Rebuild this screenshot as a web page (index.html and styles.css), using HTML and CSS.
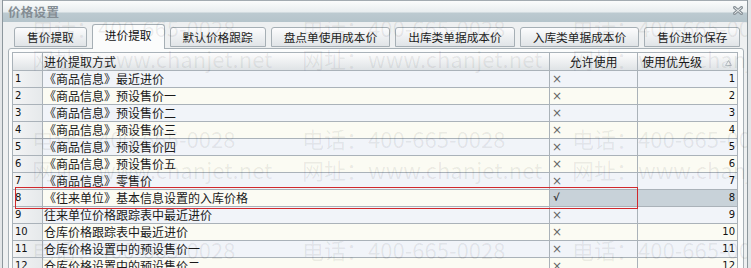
FILE: index.html
```html
<!DOCTYPE html>
<html lang="zh-CN">
<head>
<meta charset="utf-8">
<title>价格设置</title>
<link rel="stylesheet" href="styles.css">
</head>
<body>
<div class="window">
  <div class="titlebar">
    <span class="title">价格设置</span>
    <svg class="close" width="10" height="9" viewBox="0 0 10 9">
      <path d="M1.5 1.5 L8.5 7.5 M8.5 1.5 L1.5 7.5" stroke="#8b949a" stroke-width="3" stroke-linecap="square" fill="none"/>
      <path d="M1.5 1.5 L8.5 7.5 M8.5 1.5 L1.5 7.5" stroke="#f4f6f7" stroke-width="1" fill="none"/>
    </svg>
  </div>
  <div class="content">
    <div class="tabs">
      <div class="tab">售价提取</div>
      <div class="tab active">进价提取</div>
      <div class="tab">默认价格跟踪</div>
      <div class="tab">盘点单使用成本价</div>
      <div class="tab">出库类单据成本价</div>
      <div class="tab">入库类单据成本价</div>
      <div class="tab">售价进价保存</div>
    </div>
    <div class="panel">
      <div class="grid">
        <div class="row head">
          <div class="cell num"></div>
          <div class="cell name">进价提取方式</div>
          <div class="cell allow center">允许使用</div>
          <div class="cell prio headprio"><span>使用优先级</span><svg class="sort" width="7" height="6" viewBox="0 0 7 6"><path d="M3.5 0.5 L6.5 5.5 L0.5 5.5 Z" fill="none" stroke="#b3bbc1" stroke-width="1"/></svg></div>
        </div>
        <div class="row odd"><div class="cell num">1</div><div class="cell name">《商品信息》最近进价</div><div class="cell allow">×</div><div class="cell prio">1</div></div>
        <div class="row even"><div class="cell num">2</div><div class="cell name">《商品信息》预设售价一</div><div class="cell allow">×</div><div class="cell prio">2</div></div>
        <div class="row odd"><div class="cell num">3</div><div class="cell name">《商品信息》预设售价二</div><div class="cell allow">×</div><div class="cell prio">3</div></div>
        <div class="row even"><div class="cell num">4</div><div class="cell name">《商品信息》预设售价三</div><div class="cell allow">×</div><div class="cell prio">4</div></div>
        <div class="row odd"><div class="cell num">5</div><div class="cell name">《商品信息》预设售价四</div><div class="cell allow">×</div><div class="cell prio">5</div></div>
        <div class="row even"><div class="cell num">6</div><div class="cell name">《商品信息》预设售价五</div><div class="cell allow">×</div><div class="cell prio">6</div></div>
        <div class="row odd"><div class="cell num">7</div><div class="cell name">《商品信息》零售价</div><div class="cell allow">×</div><div class="cell prio">7</div></div>
        <div class="row even current"><div class="cell num">8</div><div class="cell name">《往来单位》基本信息设置的入库价格</div><div class="cell allow sel check">√</div><div class="cell prio sel">8</div><div class="focus"></div></div>
        <div class="row odd"><div class="cell num">9</div><div class="cell name">往来单位价格跟踪表中最近进价</div><div class="cell allow">×</div><div class="cell prio">9</div></div>
        <div class="row even"><div class="cell num">10</div><div class="cell name">仓库价格跟踪表中最近进价</div><div class="cell allow">×</div><div class="cell prio">10</div></div>
        <div class="row odd"><div class="cell num">11</div><div class="cell name">仓库价格设置中的预设售价一</div><div class="cell allow">×</div><div class="cell prio">11</div></div>
        <div class="row even"><div class="cell num">12</div><div class="cell name">仓库价格设置中的预设售价二</div><div class="cell allow">×</div><div class="cell prio">12</div></div>
      </div>
    </div>
    <div class="watermark">
      <div class="wm-grid">
        <div class="wm-tile">电话：400-665-0028<br>网址：www.chanjet.net</div>
        <div class="wm-tile">电话：400-665-0028<br>网址：www.chanjet.net</div>
        <div class="wm-tile">电话：400-665-0028<br>网址：www.chanjet.net</div>
        <div class="wm-tile">电话：400-665-0028<br>网址：www.chanjet.net</div>
        <div class="wm-tile">电话：400-665-0028<br>网址：www.chanjet.net</div>
        <div class="wm-tile">电话：400-665-0028<br>网址：www.chanjet.net</div>
        <div class="wm-tile">电话：400-665-0028<br>网址：www.chanjet.net</div>
        <div class="wm-tile">电话：400-665-0028<br>网址：www.chanjet.net</div>
        <div class="wm-tile">电话：400-665-0028<br>网址：www.chanjet.net</div>
      </div>
    </div>
  </div>
</div>
</body>
</html>
```
FILE: styles.css
```css
html, body {
  margin: 0;
  padding: 0;
}
body {
  background: #e3e6e8;
  font-family: "Noto Sans CJK SC", "Liberation Sans", sans-serif;
  font-size: 12px;
  color: #1a1a1a;
  overflow: hidden;
  width: 751px;
  height: 268px;
}
.window {
  margin-left: 2px;
  width: 746px;
  height: 300px;
  box-sizing: border-box;
  border-left: 1px solid #8d979d;
  border-right: 1px solid #8d979d;
  background: #eef0f1;
}
.titlebar {
  height: 22px;
  box-sizing: border-box;
  border-top: 1px solid #a3abb1;
  background: linear-gradient(to bottom, #fbfcfc 0px, #e8edef 11px, #bccad0 12px, #b5c4cb 21px);
  display: flex;
  align-items: center;
  justify-content: space-between;
  padding: 0 4px 0 5px;
}
.title {
  font-weight: bold;
  font-size: 12.5px;
  color: #848d94;
  letter-spacing: 0.3px;
  line-height: 16px;
}
.close {
  display: block;
  margin-top: -2px;
}
.content {
  position: relative;
}
.tabs {
  height: 26px;
  display: flex;
  align-items: flex-end;
  gap: 5px;
  padding-left: 11px;
}
.tab {
  box-sizing: border-box;
  height: 20px;
  margin-bottom: 1px;
  padding: 0 12px;
  border: 1px solid #a6afb5;
  border-radius: 3px 3px 0 0;
  background: linear-gradient(to bottom, #fcfcfd, #e0e4e7);
  font-size: 11.7px;
  line-height: 18px;
  color: #1e1e1e;
  white-space: nowrap;
}
.tab.active {
  position: relative;
  z-index: 1;
  height: 25px;
  margin-bottom: -1px;
  border-bottom: none;
  background: #fbfcfc;
  line-height: 20px;
  color: #111;
}
.panel {
  margin: 0 3px 0 5px;
  border: 1px solid #a8b1b7;
  border-radius: 3px;
  background: #fbfcfc;
  padding: 3px 0 0 3px;
  height: 260px;
}
.grid {
  width: 726px;
  box-sizing: border-box;
  border-left: 1px solid #a9b2b9;
  border-top: 1px solid #a9b2b9;
}
.row {
  display: flex;
  height: 17px;
  box-sizing: border-box;
  border-bottom: 1px solid #aab2b9;
  line-height: 16px;
}
.row.head {
  height: 18px;
  line-height: 17px;
  background: linear-gradient(to bottom, #fdfdfd, #dfe3e6);
}
.row.odd { background: #f1f4f9; }
.row.even { background: #fbfbf3; }
.cell {
  box-sizing: border-box;
  border-right: 1px solid #aab2b9;
  white-space: nowrap;
  overflow: hidden;
}
.cell.num {
  width: 30px;
  padding-left: 2px;
  background: linear-gradient(to right, #f3f4f5, #e6e9eb);
  font-family: "DejaVu Sans", sans-serif;
  font-size: 10px;
  color: #111;
}
.row.head .cell.num { background: transparent; }
.cell.name {
  width: 507px;
  padding-left: 1px;
}
.cell.allow {
  width: 88px;
  padding-left: 2px;
  font-family: "DejaVu Sans", sans-serif;
  font-size: 12px;
  color: #666;
}
.cell.allow.center {
  text-align: center;
  padding-left: 0;
  font-family: "Noto Sans CJK SC", sans-serif;
  color: #1a1a1a;
}
.cell.check {
  font-family: "DejaVu Sans", sans-serif;
  font-size: 10px;
  font-weight: bold;
  color: #333;
  padding-left: 3px;
}
.cell.prio {
  width: 100px;
  text-align: right;
  padding-right: 2px;
  font-family: "DejaVu Sans", sans-serif;
  font-size: 10px;
  color: #111;
}
.cell.headprio {
  display: flex;
  justify-content: space-between;
  align-items: center;
  padding: 0 5px 0 4px;
  font-family: "Noto Sans CJK SC", sans-serif;
  font-size: 12px;
  color: #1a1a1a;
}
.sort { display: block; margin-top: 2px; }
.cell.sel { background: #c8d2d9; }
.row.current { position: relative; }
.focus {
  position: absolute;
  left: 2px;
  top: -3px;
  width: 623px;
  height: 22px;
  box-sizing: border-box;
  border: 1px solid #d0282c;
  pointer-events: none;
}
.watermark {
  position: absolute;
  left: 0;
  top: 0;
  right: 0;
  bottom: 0;
  overflow: hidden;
  pointer-events: none;
  z-index: 2;
}
.wm-grid {
  display: grid;
  grid-template-columns: repeat(3, 270px);
  grid-auto-rows: 111px;
  margin: -10px 0 0 29px;
}
.wm-tile {
  font-family: "Noto Sans CJK SC", sans-serif;
  font-size: 22px;
  line-height: 31px;
  color: rgba(0, 0, 0, 0.07);
  white-space: nowrap;
}
```
